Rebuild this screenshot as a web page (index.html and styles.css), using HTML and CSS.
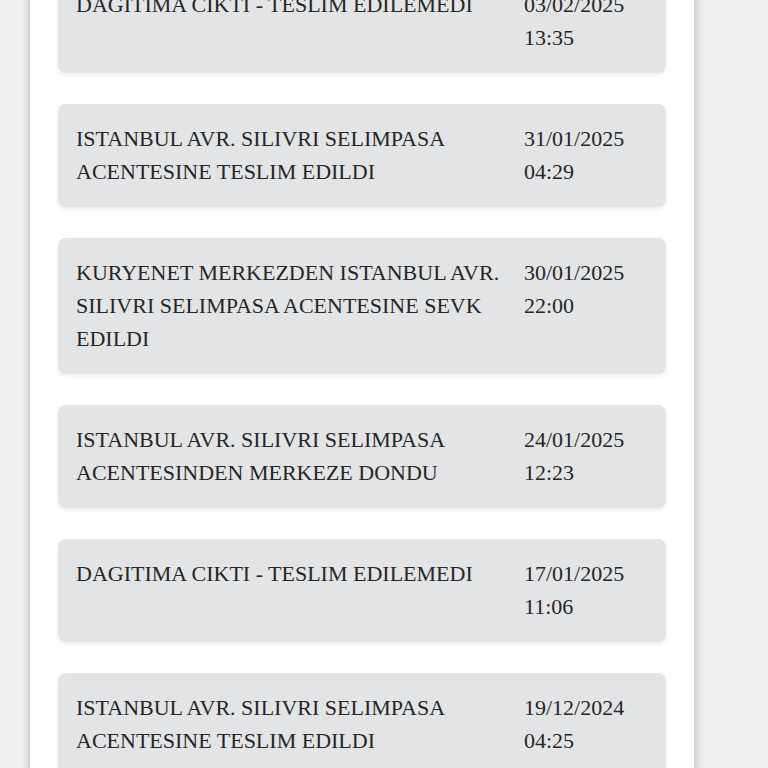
FILE: index.html
```html
<!DOCTYPE html>
<html lang="tr">
<head>
    <meta charset="UTF-8">
    <meta name="viewport" content="width=device-width, initial-scale=1.0">
    <title>Kargo Takip</title>
    <link rel="stylesheet" href="styles.css">
</head>
<body>
    <div class="panel">
        <div class="history">
            <div class="event">
                <div class="event-desc">DAGITIMA CIKTI - TESLIM EDILEMEDI</div>
                <div class="event-date">03/02/2025<br>13:35</div>
            </div>
            <div class="event">
                <div class="event-desc">ISTANBUL AVR. SILIVRI SELIMPASA ACENTESINE TESLIM EDILDI</div>
                <div class="event-date">31/01/2025<br>04:29</div>
            </div>
            <div class="event">
                <div class="event-desc">KURYENET MERKEZDEN ISTANBUL AVR. SILIVRI SELIMPASA ACENTESINE SEVK EDILDI</div>
                <div class="event-date">30/01/2025<br>22:00</div>
            </div>
            <div class="event">
                <div class="event-desc">ISTANBUL AVR. SILIVRI SELIMPASA ACENTESINDEN MERKEZE DONDU</div>
                <div class="event-date">24/01/2025<br>12:23</div>
            </div>
            <div class="event">
                <div class="event-desc">DAGITIMA CIKTI - TESLIM EDILEMEDI</div>
                <div class="event-date">17/01/2025<br>11:06</div>
            </div>
            <div class="event">
                <div class="event-desc">ISTANBUL AVR. SILIVRI SELIMPASA ACENTESINE TESLIM EDILDI</div>
                <div class="event-date">19/12/2024<br>04:25</div>
            </div>
        </div>
    </div>
</body>
</html>
```

FILE: styles.css
```css
html, body {
    height: 100%;
}

body {
    margin: 0;
    background-color: #efefef;
    font-family: "Liberation Serif", "Times New Roman", serif;
    color: #262626;
    overflow: hidden;
}

.panel {
    width: 664px;
    min-height: 100%;
    margin-left: 30px;
    padding: 0 28px;
    box-sizing: border-box;
    background: #ffffff;
    box-shadow: 0 0 9px rgba(0,0,0,0.28);
}

/* list is scrolled a little, first card cut at the top */
.history {
    display: flex;
    flex-direction: column;
    gap: 31px;
    margin-top: -30px;
}

.event {
    display: grid;
    grid-template-columns: 1fr 124px;
    padding: 18px 18px 19px;
    background: #e3e4e6;
    border-radius: 8px;
    box-shadow: 0 2px 5px rgba(0,0,0,0.08);
    font-size: 22px;
    line-height: 33px;
}
```
